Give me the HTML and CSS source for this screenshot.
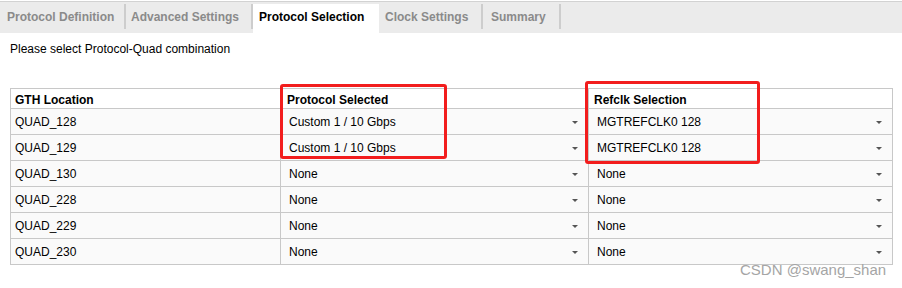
FILE: index.html
```html
<!DOCTYPE html>
<html lang="en">
<head>
  <meta charset="UTF-8">
  <meta name="viewport" content="width=device-width, initial-scale=1.0">
  <title>Protocol Selection</title>
  <link rel="stylesheet" href="styles.css">
</head>
<body>
  <div class="tabs">
    <div class="tab tab-def">Protocol Definition</div>
    <div class="tab tab-adv">Advanced Settings</div>
    <div class="tab tab-sel active">Protocol Selection</div>
    <div class="tab tab-clk">Clock Settings</div>
    <div class="tab tab-sum">Summary</div>
  </div>

  <div class="page">
    <p class="hint">Please select Protocol-Quad combination</p>

    <div class="table-wrap">
      <table class="quad-table">
        <colgroup>
          <col class="col-loc">
          <col class="col-proto">
          <col class="col-ref">
        </colgroup>
        <thead>
          <tr>
            <th>GTH Location</th>
            <th class="th-proto">Protocol Selected</th>
            <th class="th-ref">Refclk Selection</th>
          </tr>
        </thead>
        <tbody>
          <tr>
            <td>QUAD_128</td>
            <td><div class="combo">Custom 1 / 10 Gbps<span class="arrow"></span></div></td>
            <td><div class="combo">MGTREFCLK0 128<span class="arrow"></span></div></td>
          </tr>
          <tr>
            <td>QUAD_129</td>
            <td><div class="combo">Custom 1 / 10 Gbps<span class="arrow"></span></div></td>
            <td><div class="combo">MGTREFCLK0 128<span class="arrow"></span></div></td>
          </tr>
          <tr>
            <td>QUAD_130</td>
            <td><div class="combo">None<span class="arrow"></span></div></td>
            <td><div class="combo">None<span class="arrow"></span></div></td>
          </tr>
          <tr>
            <td>QUAD_228</td>
            <td><div class="combo">None<span class="arrow"></span></div></td>
            <td><div class="combo">None<span class="arrow"></span></div></td>
          </tr>
          <tr>
            <td>QUAD_229</td>
            <td><div class="combo">None<span class="arrow"></span></div></td>
            <td><div class="combo">None<span class="arrow"></span></div></td>
          </tr>
          <tr>
            <td>QUAD_230</td>
            <td><div class="combo">None<span class="arrow"></span></div></td>
            <td><div class="combo">None<span class="arrow"></span></div></td>
          </tr>
        </tbody>
      </table>

      <!-- red highlight boxes drawn over the table -->
      <div class="mark mark-proto"></div>
      <div class="mark mark-ref"></div>
    </div>
  </div>

  <div class="watermark">CSDN @swang_shan</div>
</body>
</html>
```

FILE: styles.css
```css
body {
  margin: 0;
  font-family: "Liberation Sans", Arial, sans-serif;
  font-size: 12px;
  color: #000;
  background-color: #fff;
  position: relative;
  height: 288px;
  overflow: hidden;
}

/* tab strip */
.tabs {
  display: flex;
  margin-top: 1px;
  border-top: 1px solid #d2d2d2;
  padding-top: 2px;
  height: 29px;
  background-color: #ebebeb;
}

.tab {
  box-sizing: border-box;
  padding-left: 6px;
  line-height: 27px;
  font-weight: bold;
  color: #8a8a8a;
  white-space: nowrap;
  background: linear-gradient(#cdcdcd, #cdcdcd) right top / 2px 25px no-repeat;
}

.tab-def { width: 126px; padding-left: 7px; }
.tab-adv { width: 127px; padding-left: 5px; }
.tab-sel { width: 126px; }
.tab-clk { width: 104px; }
.tab-sum { width: 78px; padding-left: 8px; }

.tab.active {
  color: #000;
  background: #fff;
}

/* content */
.page {
  padding: 0 10px;
}

.hint {
  margin: 9px 0 0;
  line-height: 15px;
}

.table-wrap {
  position: relative;
  margin-top: 31px;
  width: 882px;
}

.quad-table {
  width: 882px;
  table-layout: fixed;
  border-collapse: collapse;
  background-color: #fafafa;
}

.col-loc { width: 270px; }
.col-proto { width: 308px; }
.col-ref { width: 304px; }

.quad-table th,
.quad-table td {
  border: 1px solid #c8c8c8;
  padding: 0 4px;
  text-align: left;
  white-space: nowrap;
}

.quad-table th {
  height: 17px;
  padding-top: 2px;
  font-weight: bold;
  background-color: #fff;
}

.quad-table th.th-proto { padding-left: 6px; }
.quad-table th.th-ref { padding-left: 5px; }

.quad-table td {
  height: 24px;
  padding-top: 1px;
}

.quad-table td + td {
  padding: 1px 10px 0 8px;
}

.combo {
  display: flex;
  align-items: center;
  justify-content: space-between;
}

.arrow {
  width: 0;
  height: 0;
  border-left: 3px solid transparent;
  border-right: 3px solid transparent;
  border-top: 3px solid #555;
}

.mark {
  position: absolute;
  box-sizing: border-box;
  border: 3px solid #f21d1d;
  border-radius: 3px;
}

.mark-proto {
  left: 270px;
  top: -4px;
  width: 167px;
  height: 75px;
}

.mark-ref {
  left: 575px;
  top: -7px;
  width: 175px;
  height: 83px;
}

.watermark {
  position: absolute;
  left: 740px;
  top: 261px;
  font-family: "Liberation Sans", Arial, sans-serif;
  font-size: 15px;
  color: #a5a5a5;
  white-space: nowrap;
}
```
